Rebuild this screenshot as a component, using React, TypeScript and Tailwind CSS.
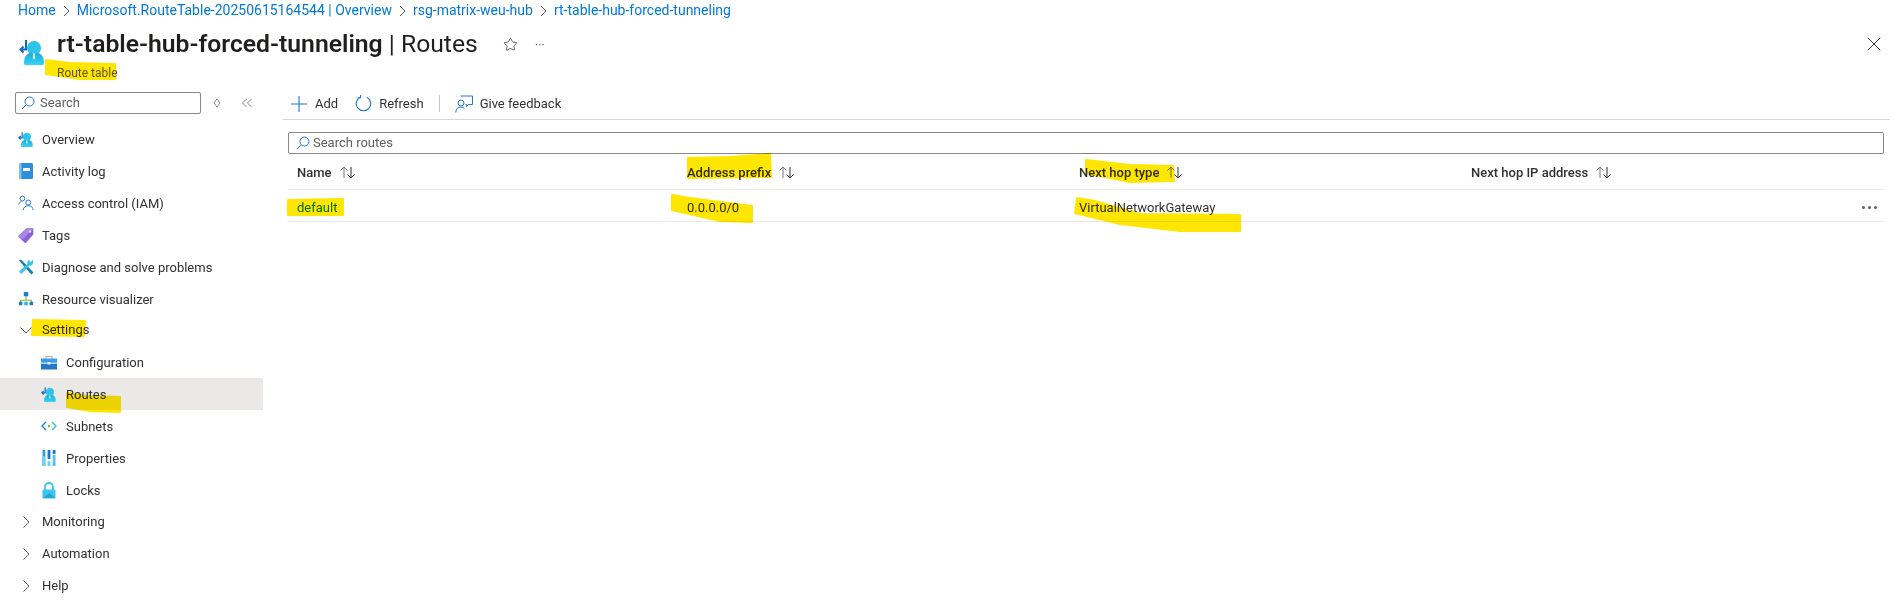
import type { ReactNode } from 'react';
import { Star, X } from 'lucide-react';

const font = '[font-family:"Roboto","Noto_Sans",sans-serif]';

function RouteTableIcon({ size = 16 }: { size?: number }) {
  return (
    <svg width={size} height={size} viewBox="0 0 27 27" className="shrink-0">
      <defs>
        <linearGradient id="rtBody" x1="0" y1="0" x2="0" y2="1">
          <stop offset="0" stopColor="#1fa8d8" />
          <stop offset="1" stopColor="#35d6f5" />
        </linearGradient>
      </defs>
      <circle cx="15" cy="10" r="7" fill="#2cc4ea" />
      <path d="M5 25.500c0-6 2-9.500 6-10.500h8c4 1 6 4.500 6 10.500 0 .8-.7 1.500-1.500 1.500h-17C5.700 27 5 26.300 5 25.500z" fill="url(#rtBody)" />
      <path d="M13.500 15.500h3l-.8 1.500.5 3-1.200 1.500-1.200-1.500.5-3z" fill="#e8f8fd" />
      <path d="M7 2v9.500H2M4.500 8.500 1.500 11.500l3 3" fill="none" stroke="#1668c4" strokeWidth="2" />
    </svg>
  );
}

function BookIcon() {
  return (
    <svg width="16" height="18" viewBox="0 0 16 18">
      <rect x="1" y="1" width="14" height="16" rx="1.500" fill="#2b8fdc" />
      <rect x="1" y="1" width="2.500" height="16" rx="1" fill="#7cc3f3" />
      <rect x="5" y="6" width="7" height="3" fill="#fff" />
    </svg>
  );
}

function PeopleIcon() {
  return (
    <svg width="18" height="18" viewBox="0 0 18 18" fill="none" stroke="#1f78d1" strokeWidth="1.100">
      <circle cx="5" cy="4" r="2.700" />
      <circle cx="11.500" cy="8.500" r="2.800" />
      <path d="M1 11c0-2 1.200-3.300 3-3.600M6 17c0-3 2.300-5 5.500-5s5.500 2 5.500 5" />
    </svg>
  );
}

function TagIcon() {
  return (
    <svg width="16" height="17" viewBox="0 0 16 17">
      <path d="M8.500 1.200 14.500 1c.5 0 .8.300.8.800v5.700L8 15.800c-.4.400-1 .4-1.400 0L.8 10c-.4-.4-.4-1 0-1.400z" fill="#8c63d6" />
      <path d="M8.500 1.200 14.500 1c.5 0 .8.300.8.800L5 12 .8 10c-.4-.4-.4-1 0-1.400z" fill="#a887e6" />
      <circle cx="12" cy="4.500" r="1.200" fill="#e6dcf8" />
    </svg>
  );
}

function WrenchIcon() {
  return (
    <svg width="16" height="16" viewBox="0 0 16 16">
      <path d="M1 1.500 3 .5l10.500 11 2 2-2 2-2-2z" fill="#0f7fb0" />
      <path d="M15 .8 12 3.500 11.500 1C9.800 1.200 8.800 3 9.500 4.800L1 12.800 3.200 15l8.300-8.500C13.800 7.200 15.800 5 15 .8z" fill="#33c4ea" />
    </svg>
  );
}

function TreeIcon() {
  return (
    <svg width="18" height="16" viewBox="0 0 18 16">
      <path d="M9 4v6M3 12V9.500h12V12" fill="none" stroke="#7ab82e" strokeWidth="1.200" />
      <rect x="6.500" y="0" width="5" height="5" rx=".5" fill="#1f78d1" />
      <rect x="1" y="11" width="4" height="4" rx=".5" fill="#1f78d1" />
      <rect x="7" y="11" width="4" height="4" rx=".5" fill="#2fb4e6" />
      <rect x="13" y="11" width="4" height="4" rx=".5" fill="#1f78d1" />
    </svg>
  );
}

function ToolboxIcon() {
  return (
    <svg width="16" height="15" viewBox="0 0 16 15">
      <path d="M5 4V1.500h6V4" fill="none" stroke="#a7b3bd" strokeWidth="1.200" />
      <rect x="0" y="3.500" width="16" height="5" fill="#3f9be0" />
      <rect x="0" y="8.500" width="16" height="6" fill="#2277c8" />
      <rect x="0" y="7.500" width="16" height="1.500" fill="#a9d8f5" />
      <rect x="6.500" y="7" width="3" height="2.500" fill="#e6f4fc" />
    </svg>
  );
}

function SubnetIcon() {
  return (
    <svg width="16" height="10" viewBox="0 0 16 10" fill="none">
      <path d="M5 1 1 5l4 4" stroke="#1f86d6" strokeWidth="1.400" />
      <path d="m11 1 4 4-4 4" stroke="#35bdea" strokeWidth="1.400" />
      <circle cx="8" cy="5" r="1.200" fill="#7ab82e" />
    </svg>
  );
}

function PropsIcon() {
  return (
    <svg width="14" height="16" viewBox="0 0 14 16">
      <rect x="0.500" y="0" width="2.800" height="16" fill="#2f9fe4" />
      <rect x="0.500" y="6" width="2.800" height="10" fill="#66d0f5" />
      <rect x="5.600" y="0" width="2.800" height="9" fill="#1f78d1" />
      <rect x="5.600" y="11" width="2.800" height="5" fill="#66d0f5" />
      <rect x="10.700" y="0" width="2.800" height="4" fill="#1f78d1" />
      <rect x="10.700" y="5" width="2.800" height="11" fill="#4fc3ee" />
    </svg>
  );
}

function LockIcon() {
  return (
    <svg width="14" height="17" viewBox="0 0 14 17">
      <path d="M3 8V5a4 4 0 0 1 8 0v3" fill="none" stroke="#3cc5ee" strokeWidth="1.800" />
      <rect x="0.500" y="7.500" width="13" height="9" rx="1" fill="#3cc5ee" />
      <path d="m.5 16 6.500-4.500 6.500 4.500" fill="#1fa3d8" />
    </svg>
  );
}

function SearchGlyph() {
  return (
    <svg width="14" height="14" viewBox="0 0 14 14" fill="none" stroke="#1f78d1" strokeWidth="1" className="shrink-0">
      <circle cx="8.500" cy="5.500" r="4.500" />
      <path d="M5.200 8.800.8 13.200" />
    </svg>
  );
}

function Caret({ open }: { open?: boolean }) {
  return (
    <svg width="12" height="12" viewBox="0 0 12 12" fill="none" stroke="#605e5c" strokeWidth="1" className="shrink-0">
      {open ? <path d="M0.500 3.500 6 9l5.500-5.500" /> : <path d="M3.500.5 9 6l-5.500 5.500" />}
    </svg>
  );
}

function SortArrows() {
  return (
    <svg width="17" height="13" viewBox="0 0 17 13" fill="none" strokeWidth="1" className="shrink-0">
      <path d="M5 12V1M1.500 4.500 5 1l3.500 3.500" stroke="#7a7876" />
      <path d="M12 1v11M8.500 8.500 12 12l3.500-3.500" stroke="#323130" />
    </svg>
  );
}

function NavRow({ icon, label, active, sub }: { icon: ReactNode; label: string; active?: boolean; sub?: boolean }) {
  return (
    <div className={`flex h-8 items-center ${sub ? 'pl-[41px]' : 'pl-[18px]'} ${active ? 'bg-[#ebe9e7]' : ''}`}>
      <span className={`flex w-[16px] justify-center ${sub ? 'mr-[9px]' : 'mr-[8px]'}`}>{icon}</span>
      <span className="pt-[1px]">{label}</span>
    </div>
  );
}

function GroupRow({ label, open, className }: { label: string; open?: boolean; className?: string }) {
  return (
    <div className={`flex items-center pl-[20px] ${className ?? 'h-8'}`}>
      <Caret open={open} />
      <span className="ml-[10px]">{label}</span>
    </div>
  );
}

function Sidebar() {
  return (
    <aside className="w-[263px] shrink-0 text-[13px] text-[#323130]">
      <div className="flex h-[22px] items-center pl-[15px]">
        <div className="flex h-[22px] w-[186px] items-center gap-[5px] rounded-[2px] border border-[#8a8886] pl-[5px] text-[#605e5c]">
          <SearchGlyph />
          <span>Search</span>
        </div>
        <svg width="10" height="10" viewBox="0 0 10 10" fill="none" stroke="#8a8886" className="ml-[11px]">
          <path d="M5 1 8 5 5 9 2 5z" />
        </svg>
        <svg width="12" height="10" viewBox="0 0 12 10" fill="none" stroke="#8a8886" className="ml-[19px]">
          <path d="M5.500 1 1.500 5l4 4M10.500 1l-4 4 4 4" />
        </svg>
      </div>
      <nav className="mt-[9px]">
        <NavRow icon={<RouteTableIcon />} label="Overview" />
        <NavRow icon={<BookIcon />} label="Activity log" />
        <NavRow icon={<PeopleIcon />} label="Access control (IAM)" />
        <NavRow icon={<TagIcon />} label="Tags" />
        <NavRow icon={<WrenchIcon />} label="Diagnose and solve problems" />
        <NavRow icon={<TreeIcon />} label="Resource visualizer" />
        <GroupRow label="Settings" open className="h-[31px] pb-[2px]" />
        <NavRow sub icon={<ToolboxIcon />} label="Configuration" />
        <NavRow sub active icon={<RouteTableIcon />} label="Routes" />
        <NavRow sub icon={<SubnetIcon />} label="Subnets" />
        <NavRow sub icon={<PropsIcon />} label="Properties" />
        <NavRow sub icon={<LockIcon />} label="Locks" />
        <GroupRow label="Monitoring" />
        <GroupRow label="Automation" />
        <GroupRow label="Help" />
      </nav>
    </aside>
  );
}

function Toolbar() {
  return (
    <div className="flex h-[28px] items-center border-b border-[#d6d6d6] pb-[4px] pl-[8px] text-[13px] text-[#323130]">
      <svg width="16" height="16" viewBox="0 0 16 16" stroke="#1f78d1" strokeWidth="1.100" className="mr-[8px]">
        <path d="M8 0v16M0 8h16" />
      </svg>
      <span>Add</span>
      <svg width="17" height="17" viewBox="0 0 17 17" fill="none" stroke="#1f78d1" strokeWidth="1.100" className="ml-[17px] mr-[7px]">
        <path d="M5.200 2.200a7.200 7.200 0 1 0 6.600 0M5.500 -.2v3h-3" />
      </svg>
      <span>Refresh</span>
      <span className="mx-[15px] h-[17px] w-px bg-[#c8c6c4]" />
      <svg width="18" height="18" viewBox="0 0 18 18" fill="none" stroke="#1f78d1" strokeWidth="1" className="mr-[7px]">
        <circle cx="6" cy="8" r="3" />
        <path d="M.8 17.500c0-3.500 2-5.500 5.200-5.500 1.500 0 2.500.5 3.500 1.300M5.500 1h12v8.500h-4l-2 2v-2h-1" />
      </svg>
      <span>Give feedback</span>
    </div>
  );
}

const columns = 'grid grid-cols-[390px_392px_392px_1fr] pl-[9px]';

function HeadCell({ label }: { label: string }) {
  return (
    <div className="flex items-center gap-[7px] font-medium text-[#323130]">
      <span>{label}</span>
      <SortArrows />
    </div>
  );
}

function RoutesTable() {
  return (
    <div className="ml-[5px] mr-[6px] text-[13px] text-[#323130]">
      <div className={`${columns} h-[36px] items-center border-b border-[#edebe9] pt-[2px]`}>
        <HeadCell label="Name" />
        <HeadCell label="Address prefix" />
        <HeadCell label="Next hop type" />
        <HeadCell label="Next hop IP address" />
      </div>
      <div className={`${columns} h-[32px] items-center border-b border-[#edebe9] pt-[4px]`}>
        <span className="text-[#0078d4]">default</span>
        <span>0.0.0.0/0</span>
        <span>VirtualNetworkGateway</span>
        <div className="flex justify-end gap-[3px] pr-[7px]">
          <span className="h-[3px] w-[3px] rounded-full bg-[#605e5c]" />
          <span className="h-[3px] w-[3px] rounded-full bg-[#605e5c]" />
          <span className="h-[3px] w-[3px] rounded-full bg-[#605e5c]" />
        </div>
      </div>
    </div>
  );
}

// marker strokes somebody drew on top of the screenshot
function Highlights() {
  const marks = [
    '46,60 70,63 115,64 115,79 80,79 46,74',
    '33,320 85,321 84,336 32,335',
    '67,393 85,396 120,397 120,412 90,411 67,407',
    '288,200 343,199 343,215 288,215',
    '688,158 730,157 770,154 771,177 688,178',
    '672,195 690,198 752,206 752,222 720,221 672,210',
    '1086,160 1130,165 1173,166 1174,181 1130,182 1086,173',
    '1077,198 1095,201 1140,214 1240,215 1240,231 1180,231 1120,224 1075,213',
  ];
  return (
    <svg width="1902" height="602" className="pointer-events-none absolute left-0 top-0 mix-blend-multiply">
      {marks.map((points) => (
        <polygon key={points} points={points} fill="#ffe600" stroke="#ffe600" strokeWidth="2" strokeLinejoin="round" />
      ))}
    </svg>
  );
}

function Chevron() {
  return (
    <svg width="7" height="12" viewBox="0 0 7 12" fill="none" stroke="#605e5c" strokeWidth="1" className="mx-[3px] shrink-0">
      <path d="m1 1 5 5-5 5" />
    </svg>
  );
}

export default function App() {
  return (
    <div className={`relative h-[602px] w-[1902px] overflow-hidden bg-white ${font}`}>
      <div className="flex h-[20px] items-center gap-[4px] pl-[18px] pt-[1px] text-[14px] text-[#0078d4]">
        <span>Home</span>
        <Chevron />
        <span>Microsoft.RouteTable-20250615164544 | Overview</span>
        <Chevron />
        <span>rsg-matrix-weu-hub</span>
        <Chevron />
        <span>rt-table-hub-forced-tunneling</span>
      </div>
      <header className="flex h-[72px] pl-[19px]">
        <div className="mr-[11px] mt-[18px]">
          <RouteTableIcon size={27} />
        </div>
        <div className="pt-[10px]">
          <div className="flex h-[28px] items-center">
            <h1 className="text-[24.7px] text-[#201f1e]">
              <span className="font-semibold">rt-table-hub-forced-tunneling</span> | Routes
            </h1>
            <Star size={15} strokeWidth={1.2} className="ml-[25px] text-[#323130]" />
            <span className="ml-[17px] text-[13px] leading-none text-[#605e5c]">···</span>
          </div>
          <div className="mt-[6px] text-[12px] text-[#605e5c]">Route table</div>
        </div>
        <X size={24} strokeWidth={1} className="ml-auto mr-[16px] mt-[12px] text-[#323130]" />
      </header>
      <div className="flex">
        <Sidebar />
        <main className="flex-1 pl-[20px] pr-[12px]">
          <Toolbar />
          <div className="ml-[5px] mr-[6px] mt-[12px] flex h-[22px] items-center gap-[3px] rounded-[2px] border border-[#8a8886] pl-[7px] text-[13px] text-[#605e5c]">
            <SearchGlyph />
            <span>Search routes</span>
          </div>
          <RoutesTable />
        </main>
      </div>
      <Highlights />
    </div>
  );
}
